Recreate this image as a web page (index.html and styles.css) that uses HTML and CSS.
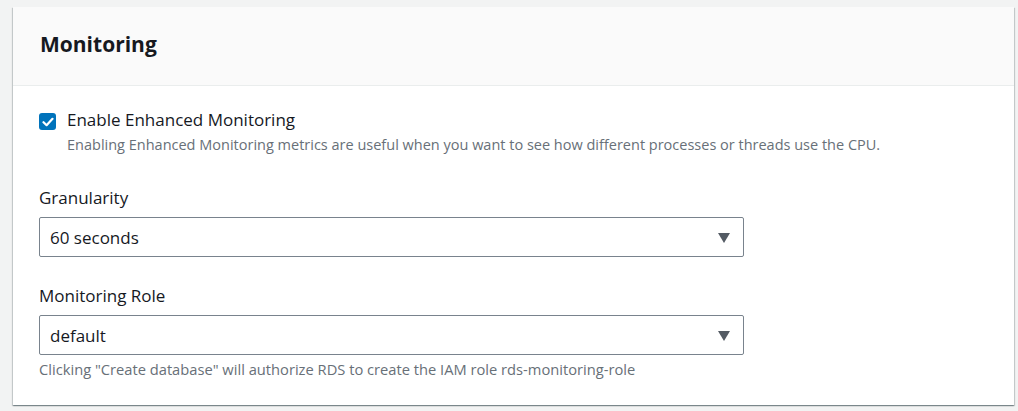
FILE: index.html
```html
<!DOCTYPE html>
<html>
<head>
<meta charset="utf-8">
<link rel="stylesheet" href="styles.css">
</head>
<body>
<div class="card">
  <div class="card-header"><h2 class="title">Monitoring</h2></div>
  <div class="card-body">
    <div class="check-row">
      <span class="checkbox">
        <svg width="12" height="10" viewBox="0 0 12 10"><path d="M1.5 5.2 L4.6 8.2 L10.5 1.8" fill="none" stroke="#fff" stroke-width="2.2" stroke-linecap="round" stroke-linejoin="round"/></svg>
      </span>
      <div class="check-text">
        <div class="check-label">Enable Enhanced Monitoring</div>
        <div class="check-desc">Enabling Enhanced Monitoring metrics are useful when you want to see how different processes or threads use the CPU.</div>
      </div>
    </div>
    <div class="field field-first">
      <div class="field-label">Granularity</div>
      <div class="select"><span>60 seconds</span><span class="caret"></span></div>
    </div>
    <div class="field field-second">
      <div class="field-label">Monitoring Role</div>
      <div class="select"><span>default</span><span class="caret"></span></div>
      <div class="hint">Clicking "Create database" will authorize RDS to create the IAM role rds-monitoring-role</div>
    </div>
  </div>
</div>
</body>
</html>
```
FILE: styles.css
```css
html, body { margin: 0; padding: 0; }
body {
  background: #f2f3f3;
  font-family: "Open Sans", "Noto Sans", sans-serif;
  color: #16191f;
  padding: 7px 4px 6px 13px;
}
.card {
  width: 1001px;
  height: 398px;
  background: #fff;
  box-shadow: 0 1px 1px 0 rgba(0,28,36,.3), 1px 1px 1px 0 rgba(0,28,36,.15), -1px 1px 1px 0 rgba(0,28,36,.15);
  display: flex;
  flex-direction: column;
}
.card-header {
  background: #fafafa;
  border-bottom: 1px solid #eaeded;
  box-sizing: border-box;
  height: 79px;
  display: flex;
  align-items: center;
  padding: 0 27px 5px;
}
.title {
  margin: 0;
  font-size: 21px;
  font-weight: 700;
  color: #16191f;
}
.card-body {
  padding: 22px 27px 0 26px;
}
.check-row {
  display: flex;
  gap: 11px;
}
.checkbox {
  width: 17px;
  height: 17px;
  border-radius: 3px;
  background: #0073bb;
  margin-top: 5px;
  display: flex;
  align-items: center;
  justify-content: center;
  flex: none;
}
.check-label {
  font-size: 17px;
  line-height: 24px;
}
.check-desc {
  font-size: 14.5px;
  line-height: 20px;
  color: #687078;
  margin-top: 3px;
}
.field-first { margin-top: 31px; }
.field-second { margin-top: 27px; }
.field-label {
  font-size: 17px;
  line-height: 24px;
  margin-bottom: 7px;
}
.select {
  width: 705px;
  height: 40px;
  border: 1px solid #79838d;
  border-radius: 2px;
  display: flex;
  align-items: center;
  justify-content: space-between;
  padding: 0 13px 0 10px;
  box-sizing: border-box;
  font-size: 17px;
}
.caret {
  width: 0;
  height: 0;
  border-left: 6.5px solid transparent;
  border-right: 6.5px solid transparent;
  border-top: 10px solid #545b64;
  margin-top: 2px;
}
.hint {
  font-size: 14.7px;
  line-height: 20px;
  color: #687078;
  margin-top: 4px;
}
```
